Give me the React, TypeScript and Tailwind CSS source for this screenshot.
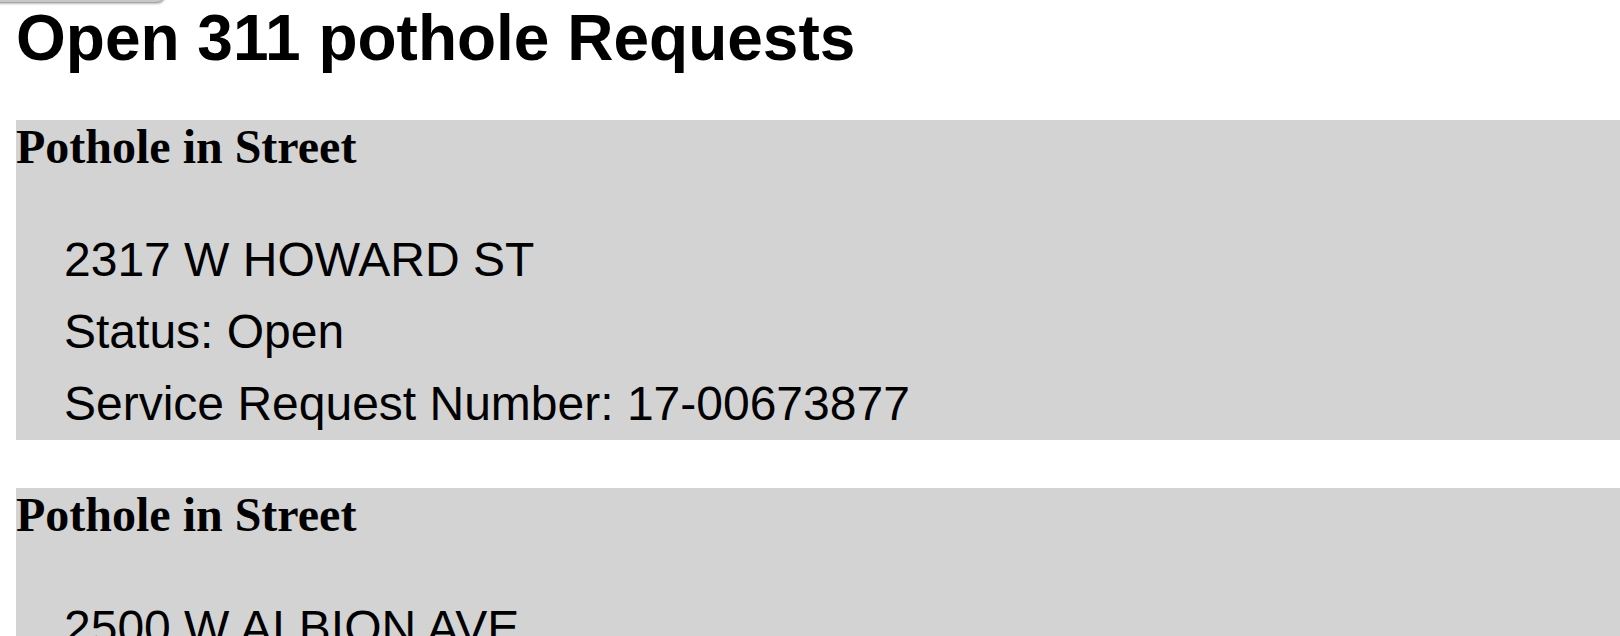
import React from "react";

const sans = { fontFamily: '"Liberation Sans", Arial, Helvetica, sans-serif' };

type Req = { type: string; address: string; status: string; number: string };

const requests: Req[] = [
  { type: "Pothole in Street", address: "2317 W HOWARD ST", status: "Open", number: "17-00673877" },
  { type: "Pothole in Street", address: "2500 W ALBION AVE", status: "Open", number: "17-00673901" },
];

function RequestCard({ r }: { r: Req }) {
  return (
    <div className="bg-[#d3d3d3] w-full">
      <h2 className="font-['Liberation_Serif',_'Times_New_Roman',_serif] font-bold text-[48px] leading-[53px] text-black">
        {r.type}
      </h2>
      <div className="mt-[51px] pl-[48px] font-['Liberation_Sans',_Arial,_sans-serif] text-[48px] leading-[72px] text-black">
        <p>{r.address}</p>
        <p>Status: {r.status}</p>
        <p>Service Request Number: {r.number}</p>
      </div>
    </div>
  );
}

export default function App() {
  return (
    <div className="relative w-[1620px] h-[636px] overflow-hidden bg-white" style={sans}>
      <div className="absolute left-[-12px] top-[-40px] w-[177px] h-[42px] rounded-[8px] bg-[#c8c8c8] shadow-[0_1px_3px_rgba(0,0,0,0.55)]" />
      <div className="pl-4">
        <h1 className="pt-[3px] font-['Liberation_Sans',_Arial,_sans-serif] font-bold text-[64px] leading-[71px] text-black">
          Open 311 pothole Requests
        </h1>
        <div className="mt-[46px] flex flex-col gap-[48px]">
          {requests.map((r, i) => (
            <RequestCard key={i} r={r} />
          ))}
        </div>
      </div>
    </div>
  );
}
